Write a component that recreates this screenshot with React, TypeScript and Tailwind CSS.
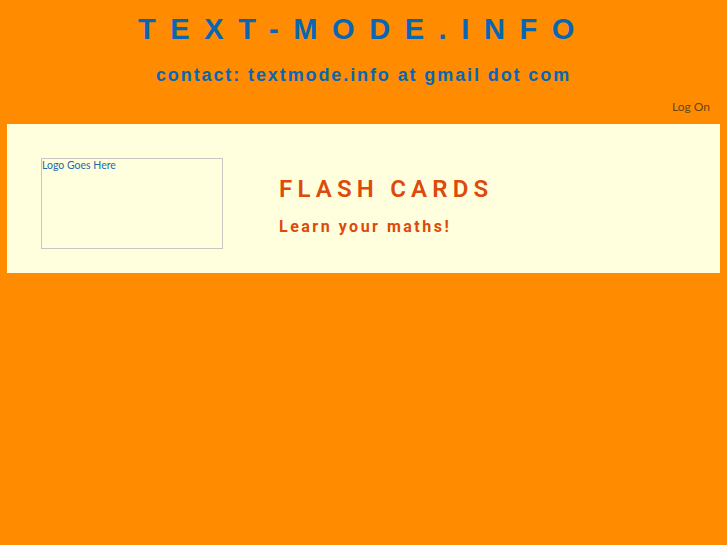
export default function App() {
  return (
    <div className="min-h-[545px] bg-[#ff8c00] font-['Liberation_Sans',Arial,sans-serif]">
      {/* Site header */}
      <header className="text-center pt-[11px]">
        <h1 className="text-[29px] leading-[36px] font-bold tracking-[14.6px] text-[#0866b4]">
          TEXT-MODE.INFO
        </h1>
        <p className="mt-[18px] text-[18px] leading-[20px] font-bold tracking-[1.9px] text-[#0866b4]">
          contact: textmode.info at gmail dot com
        </p>
      </header>

      <div className="flex justify-end pr-[17px] pt-[15px] pb-[10px]">
        <a className="font-['Lato',sans-serif] text-[12px] leading-[14px] text-[#6b4418]" href="#">
          Log On
        </a>
      </div>

      {/* Main panel */}
      <div className="mx-[7px] h-[149px] bg-[#ffffdd] flex pt-[34px] pl-[34px]">
        <div className="w-[182px] h-[91px] border border-[#c8c8c0] text-[10.5px] leading-[13px] text-[#1a6aae] font-['Lato',sans-serif]">
          Logo Goes Here
        </div>
        <div className="ml-[56px] pt-[18px] font-['Roboto',sans-serif]">
          <h2 className="text-[24px] leading-[26px] font-semibold tracking-[5.2px] text-[#dd4a0b]">
            FLASH CARDS
          </h2>
          <p className="mt-[16px] text-[16px] leading-[18px] font-bold tracking-[2.5px] text-[#dd4a0b]">
            Learn your maths!
          </p>
        </div>
      </div>
    </div>
  )
}
